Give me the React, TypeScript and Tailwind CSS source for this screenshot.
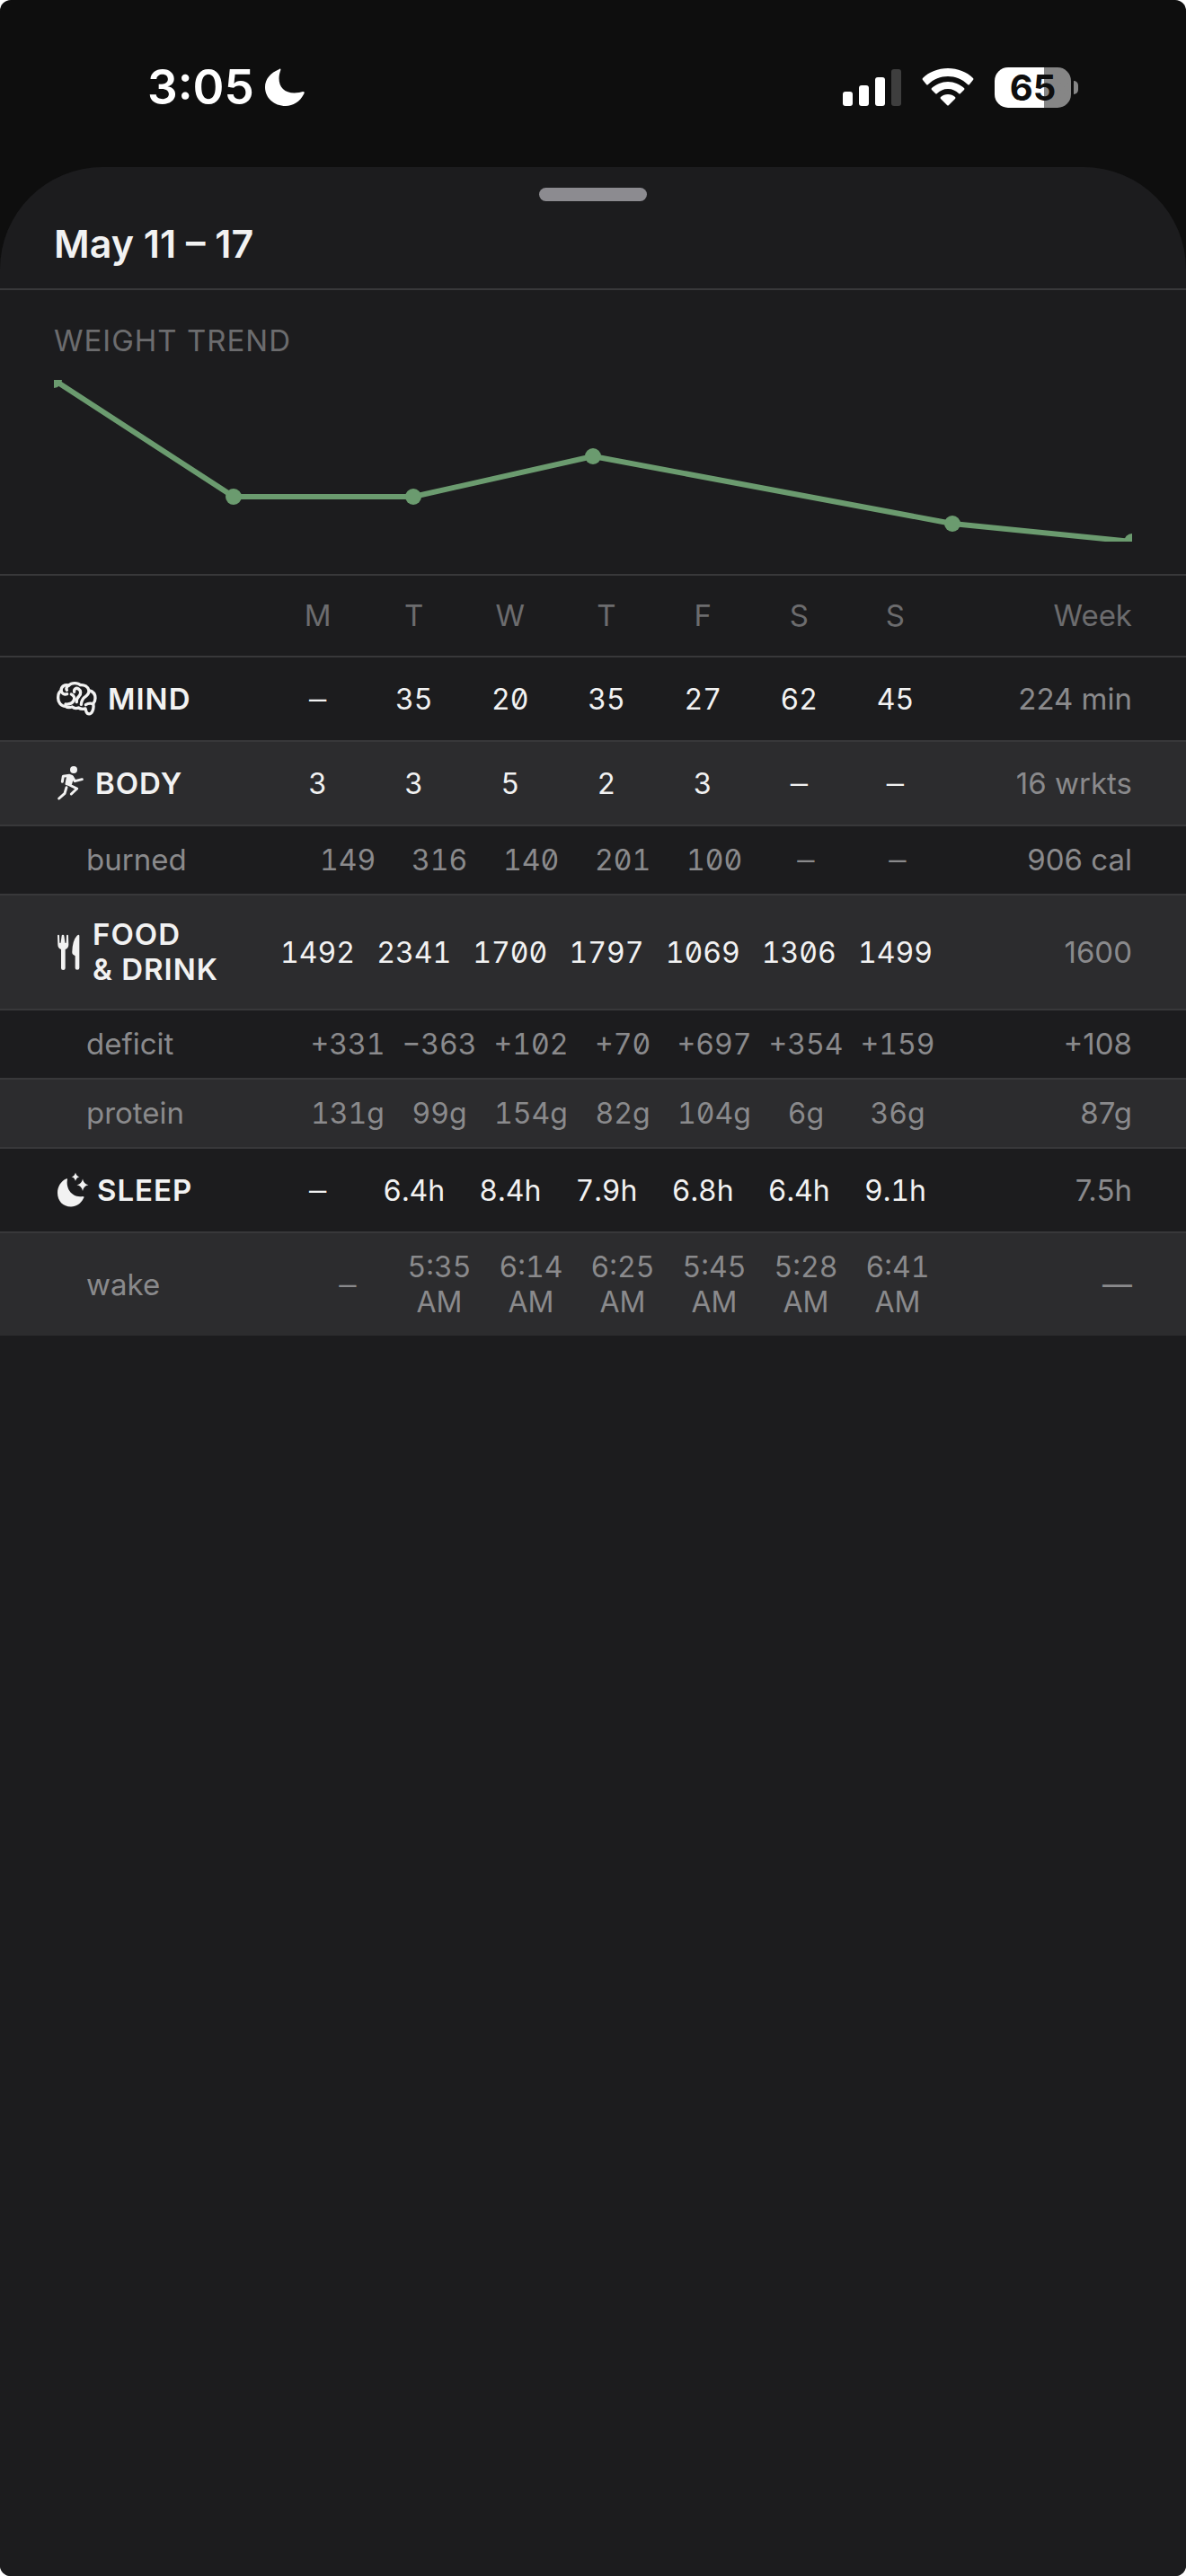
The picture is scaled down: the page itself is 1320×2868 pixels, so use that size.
import type { ReactNode } from "react";
import { clsx } from "clsx";

type Row = {
  label: ReactNode;
  icon?: ReactNode;
  days: string[];
  week: string;
};

const dayNames = ["M", "T", "W", "T", "F", "S", "S"];

// x / y inside the 1200 x 180 chart box
const weights = [
  [0, 0],
  [200, 130],
  [400, 130],
  [600, 85],
  [1000, 160],
  [1200, 180],
];

const rows: Row[] = [
  {
    label: "MIND",
    icon: <BrainIcon />,
    days: ["–", "35", "20", "35", "27", "62", "45"],
    week: "224 min",
  },
  {
    label: "BODY",
    icon: <RunIcon />,
    days: ["3", "3", "5", "2", "3", "–", "–"],
    week: "16 wrkts",
  },
  {
    label: "burned",
    days: ["149", "316", "140", "201", "100", "–", "–"],
    week: "906 cal",
  },
  {
    label: (
      <>
        FOOD
        <br />& DRINK
      </>
    ),
    icon: <ForkKnifeIcon />,
    days: ["1492", "2341", "1700", "1797", "1069", "1306", "1499"],
    week: "1600",
  },
  {
    label: "deficit",
    days: ["+331", "−363", "+102", "+70", "+697", "+354", "+159"],
    week: "+108",
  },
  {
    label: "protein",
    days: ["131g", "99g", "154g", "82g", "104g", "6g", "36g"],
    week: "87g",
  },
  {
    label: "SLEEP",
    icon: <MoonStarsIcon />,
    days: ["–", "6.4h", "8.4h", "7.9h", "6.8h", "6.4h", "9.1h"],
    week: "7.5h",
  },
  {
    label: "wake",
    days: ["–", "5:35 AM", "6:14 AM", "6:25 AM", "5:45 AM", "5:28 AM", "6:41 AM"],
    week: "—",
  },
];

function BrainIcon() {
  return (
    <svg
      viewBox="60 55 144 120"
      className="h-10 w-12 shrink-0"
      fill="none"
      stroke="currentColor"
      strokeWidth="10"
      strokeLinecap="round"
      strokeLinejoin="round"
    >
      <path d="M84 88C84 74 96 66 110 70C118 61 140 60 148 69C162 67 174 75 177 87C190 90 198 100 198 113C198 122 196 127 191 132C193 140 192 150 188 158C183 168 172 168 168 158L165 148C156 150 148 149 142 145C134 148 127 147 121 142C112 145 104 144 99 140C84 140 73 127 74 110C74 100 77 92 84 88Z" />
      <path d="M84 88C86 97 94 102 104 99" />
      <path d="M110 70C103 74 100 80 103 86" />
      <path d="M118 100C127 104 131 113 126 121C122 130 112 134 99 133" />
      <path d="M128 92C126 82 134 77 142 82C151 88 151 98 144 106C137 113 134 118 136 126" />
      <path d="M177 87C178 97 173 102 165 108C156 114 152 122 151 134" />
      <path d="M191 132C184 130 174 130 166 135" />
    </svg>
  );
}

function RunIcon() {
  return (
    <svg
      viewBox="60 334 102 120"
      className="h-10 w-[34px] shrink-0"
      fill="none"
      stroke="currentColor"
      strokeWidth="9"
      strokeLinecap="round"
      strokeLinejoin="round"
    >
      <circle cx="126" cy="349" r="12" fill="currentColor" stroke="none" />
      <path d="M88 389L91 371L112 368L120 371L130 387L154 381" />
      <path d="M107 370L122 374L116 396L102 396Z" fill="currentColor" />
      <path d="M106 397L137 412L118 430" />
      <path d="M102 408L96 428L77 445" />
    </svg>
  );
}

function ForkKnifeIcon() {
  return (
    <svg viewBox="60 61 93 120" className="h-10 w-[31px] shrink-0" fill="currentColor">
      <path d="M72 66Q72 63 75 63Q78 63 78 66L79 89Q79 91 81 91Q83 91 83 89L86 66Q86 63 90 63Q94 63 94 66L97 89Q97 91 99 91Q101 91 101 89L102 66Q102 63 105 63Q108 63 108 66L109 96Q109 108 98 112L98 175Q98 181 91 181Q84 181 84 175L84 112Q73 108 73 96Z" />
      <path d="M145 66L145 174Q145 180 138 180Q131 180 131 174L131 134L124 129Q120 126 121 119Q122 82 137 66Q144 60 145 66Z" />
    </svg>
  );
}

function MoonStarsIcon() {
  return (
    <svg viewBox="0 0 36 40" className="h-10 w-9 shrink-0 overflow-visible" fill="currentColor">
      <path d="M15 8C13 18 20 29 32 27Q34.500 27 33 29C30 35 25 38.500 19 38.500C10 38.500 4 32 4 23C4 16 8 10 13.500 7.500Q15.500 7 15 8Z" />
      <path d="M24 0.500Q25 4.500 28.500 5.300Q25 6 24 10Q23 6 19.500 5.300Q23 4.500 24 0.500Z" />
      <path d="M32 7.500Q33 13 38.500 14.300Q33 15.500 32 21Q31 15.500 25.500 14.300Q31 13 32 7.500Z" />
    </svg>
  );
}

function StatusBar() {
  return (
    <header className="flex h-[186px] items-start justify-between px-[120px] pt-[62px] text-white">
      <div className="flex h-[70px] items-center gap-3 pl-11">
        <span className="text-[53px] leading-[70px] font-semibold">3:05</span>
        <svg viewBox="0 0 44 42" className="h-[42px] w-11" fill="currentColor">
          <path d="M16 1C17 0 18 1 17 3C12 18 20 30 38 27L42 26Q45 26 43 29C39 37 31 42 23 42C10 42 0 33 0 21C0 12 6 5 16 1Z" />
        </svg>
      </div>

      <div className="flex h-[70px] items-center gap-[23px]">
        <svg viewBox="0 0 65 41" className="h-[41px] w-[65px]" fill="currentColor">
          <rect x="0" y="25" width="11" height="16" rx="3" />
          <rect x="18" y="18" width="11" height="23" rx="3" />
          <rect x="36" y="9" width="11" height="32" rx="3" />
          <rect x="54" y="0" width="11" height="41" rx="3" opacity="0.2" />
        </svg>
        <svg viewBox="0 0 58 42" className="h-[42px] w-[58px]" fill="currentColor">
          <path d="M29 0C40 0 50 4 57 11Q58 12 57 13L53 18Q52 19 51 18C45 12 37 9 29 9C21 9 13 12 7 18Q6 19 5 18L1 13Q0 12 1 11C8 4 18 0 29 0Z" />
          <path d="M29 15C36 15 42 18 47 22Q48 23 47 24L43 28Q42 29 41 28C38 25 34 23 29 23C24 23 20 25 17 28Q16 29 15 28L11 24Q10 23 11 22C16 18 22 15 29 15Z" />
          <path d="M29 29C32 29 35 30 37 32Q38 33 37 34L30 41Q29 42 28 41L21 34Q20 33 21 32C23 30 26 29 29 29Z" />
        </svg>
        <div className="flex items-center gap-[3px]">
          <div className="flex h-[45px] w-[85px] items-center justify-center rounded-[15px] bg-linear-to-r from-white from-65% to-[#868686] to-65% text-[40px] leading-[45px] font-bold text-[#0e0e0e]">
            65
          </div>
          <div className="h-[15px] w-[5px] rounded-r-full bg-[#868686]" />
        </div>
      </div>
    </header>
  );
}

function WeightChart() {
  return (
    <svg viewBox="0 0 1200 180" className="w-full overflow-hidden" role="img" aria-label="Weight trend">
      <polyline
        points={weights.map((p) => p.join(",")).join(" ")}
        fill="none"
        stroke="#6b9b6f"
        strokeWidth="6"
        strokeLinejoin="round"
      />
      {weights.map(([x, y]) => (
        <circle key={x} cx={x} cy={y} r="9" fill="#6b9b6f" />
      ))}
    </svg>
  );
}

function WeekTable() {
  return (
    <table className="block text-[33px] leading-[39px]">
      <thead className="block">
        <tr className="flex items-center border-b-2 border-[#38383a] px-[60px] py-[25px] text-[#6c6c6e]">
          <td className="w-60" />
          {dayNames.map((day, i) => (
            <th key={i} scope="col" className="flex-1 text-center font-normal">
              {day}
            </th>
          ))}
          <th scope="col" className="w-[210px] text-right font-normal">
            Week
          </th>
        </tr>
      </thead>
      <tbody className="block">
        {rows.map((row, i) => (
          <tr
            key={i}
            className={clsx(
              "flex items-center border-b-2 border-[#38383a] pr-[60px] last:border-b-0 odd:bg-[#1c1c1e] even:bg-[#2c2c2e]",
              row.icon ? "py-6 pl-[60px] text-[#f2f2f2]" : "py-[18px] pl-24 text-[#8a8a8c]",
            )}
          >
            <th
              scope="row"
              className={clsx(
                "flex w-60 items-center gap-3 text-left",
                row.icon ? "min-h-11 font-semibold tracking-[1px]" : "font-normal",
              )}
            >
              {row.icon}
              <span>{row.label}</span>
            </th>
            {row.days.map((value, day) => (
              <td
                key={day}
                className={clsx(
                  "flex-1 text-center text-[32px]",
                  value === "–" ? "font-['DejaVu_Sans_Mono',monospace]" : "slashed-zero tabular-nums",
                )}
              >
                {value}
              </td>
            ))}
            <td className="w-[210px] text-right text-[#8a8a8c]">{row.week}</td>
          </tr>
        ))}
      </tbody>
    </table>
  );
}

export default function App() {
  return (
    <div className="flex min-h-screen flex-col overflow-hidden rounded-[12px] bg-[#0e0e0e] font-[Inter,sans-serif]">
      <StatusBar />
      <main className="flex-1 overflow-hidden rounded-t-[114px] bg-[#1c1c1e]">
        <div className="mx-auto mt-[23px] h-[15px] w-[120px] rounded-full bg-[#8c8b90]" />
        <h1 className="mt-[22px] border-b-2 border-[#38383a] px-[60px] pb-[25px] text-[43px] leading-[50px] font-semibold text-[#f2f2f2]">
          May 11 – 17
        </h1>
        <section className="border-b-2 border-[#38383a] px-[60px] py-9">
          <h2 className="mb-6 text-[33px] leading-10 tracking-[1px] text-[#6c6c6e]">WEIGHT TREND</h2>
          <WeightChart />
        </section>
        <WeekTable />
      </main>
    </div>
  );
}
